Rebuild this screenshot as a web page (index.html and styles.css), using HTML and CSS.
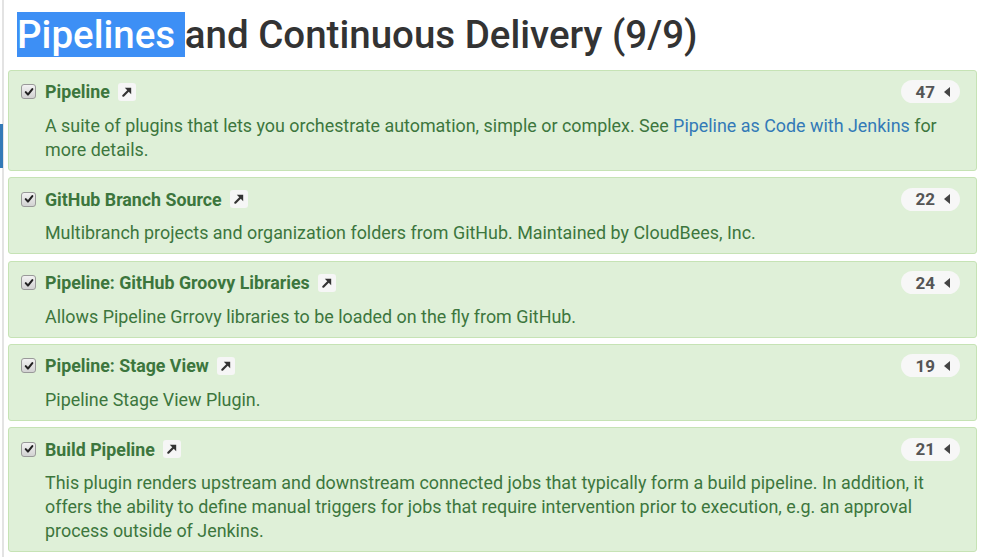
FILE: index.html
```html
<!DOCTYPE html>
<html>
<head>
<meta charset="utf-8">
<link rel="stylesheet" href="styles.css">
</head>
<body>
<div class="page">
  <div class="rail"><div class="rail-mark"></div></div>
  <main class="content">
    <h1 class="heading"><span class="sel">Pipelines </span>and Continuous Delivery (9/9)</h1>

    <div class="card">
      <div class="card-head">
        <span class="check"><svg viewBox="0 0 14 14" width="14" height="14"><path d="M3.2 7.2 L5.8 10 L10.9 3.6" fill="none" stroke="#222" stroke-width="2.4" stroke-linecap="round" stroke-linejoin="round"/></svg></span>
        <span class="name">Pipeline</span>
        <span class="ext"><svg viewBox="0 0 12 12" width="12" height="12"><path d="M2.3 9.7 L8 4" stroke="#333" stroke-width="2.2" stroke-linecap="round"/><path d="M3.8 1.8 H10.2 V8.2 Z" fill="#333"/></svg></span>
        <span class="badge">47<span class="caret"></span></span>
      </div>
      <p class="desc">A suite of plugins that lets you orchestrate automation, simple or complex. See <a class="link">Pipeline as Code with Jenkins</a> for more details.</p>
    </div>

    <div class="card">
      <div class="card-head">
        <span class="check"><svg viewBox="0 0 14 14" width="14" height="14"><path d="M3.2 7.2 L5.8 10 L10.9 3.6" fill="none" stroke="#222" stroke-width="2.4" stroke-linecap="round" stroke-linejoin="round"/></svg></span>
        <span class="name">GitHub Branch Source</span>
        <span class="ext"><svg viewBox="0 0 12 12" width="12" height="12"><path d="M2.3 9.7 L8 4" stroke="#333" stroke-width="2.2" stroke-linecap="round"/><path d="M3.8 1.8 H10.2 V8.2 Z" fill="#333"/></svg></span>
        <span class="badge">22<span class="caret"></span></span>
      </div>
      <p class="desc">Multibranch projects and organization folders from GitHub. Maintained by CloudBees, Inc.</p>
    </div>

    <div class="card">
      <div class="card-head">
        <span class="check"><svg viewBox="0 0 14 14" width="14" height="14"><path d="M3.2 7.2 L5.8 10 L10.9 3.6" fill="none" stroke="#222" stroke-width="2.4" stroke-linecap="round" stroke-linejoin="round"/></svg></span>
        <span class="name">Pipeline: GitHub Groovy Libraries</span>
        <span class="ext"><svg viewBox="0 0 12 12" width="12" height="12"><path d="M2.3 9.7 L8 4" stroke="#333" stroke-width="2.2" stroke-linecap="round"/><path d="M3.8 1.8 H10.2 V8.2 Z" fill="#333"/></svg></span>
        <span class="badge">24<span class="caret"></span></span>
      </div>
      <p class="desc">Allows Pipeline Grrovy libraries to be loaded on the fly from GitHub.</p>
    </div>

    <div class="card">
      <div class="card-head">
        <span class="check"><svg viewBox="0 0 14 14" width="14" height="14"><path d="M3.2 7.2 L5.8 10 L10.9 3.6" fill="none" stroke="#222" stroke-width="2.4" stroke-linecap="round" stroke-linejoin="round"/></svg></span>
        <span class="name">Pipeline: Stage View</span>
        <span class="ext"><svg viewBox="0 0 12 12" width="12" height="12"><path d="M2.3 9.7 L8 4" stroke="#333" stroke-width="2.2" stroke-linecap="round"/><path d="M3.8 1.8 H10.2 V8.2 Z" fill="#333"/></svg></span>
        <span class="badge">19<span class="caret"></span></span>
      </div>
      <p class="desc">Pipeline Stage View Plugin.</p>
    </div>

    <div class="card">
      <div class="card-head">
        <span class="check"><svg viewBox="0 0 14 14" width="14" height="14"><path d="M3.2 7.2 L5.8 10 L10.9 3.6" fill="none" stroke="#222" stroke-width="2.4" stroke-linecap="round" stroke-linejoin="round"/></svg></span>
        <span class="name">Build Pipeline</span>
        <span class="ext"><svg viewBox="0 0 12 12" width="12" height="12"><path d="M2.3 9.7 L8 4" stroke="#333" stroke-width="2.2" stroke-linecap="round"/><path d="M3.8 1.8 H10.2 V8.2 Z" fill="#333"/></svg></span>
        <span class="badge">21<span class="caret"></span></span>
      </div>
      <p class="desc">This plugin renders upstream and downstream connected jobs that typically form a build pipeline. In addition, it offers the ability to define manual triggers for jobs that require intervention prior to execution, e.g. an approval process outside of Jenkins.</p>
    </div>
  </main>
</div>
</body>
</html>
```

FILE: styles.css
```css
html, body {
  margin: 0;
  padding: 0;
  background: #fff;
  font-family: Roboto, "Liberation Sans", sans-serif;
  overflow: hidden;
}
.page {
  display: flex;
  height: 557px;
}
.rail {
  width: 2px;
  border-right: 2px solid #e3e3e3;
  flex: none;
}
.rail-mark {
  margin-top: 124px;
  width: 3px;
  height: 44px;
  background: #337ab7;
}
.content {
  margin-left: 4px;
  width: 969px;
  display: flex;
  flex-direction: column;
  gap: 6.3px;
}
.heading {
  margin: 12px 0 6.7px 9px;
  font-size: 38.5px;
  font-weight: 500;
  line-height: 45px;
  color: #333;
}
.sel {
  background: #3d8ff5;
  color: #fff;
}
.card {
  background: #dff0d8;
  border: 1px solid #c6e3b5;
  border-radius: 3px;
  padding: 9px 16px 8px 12px;
  color: #3c763d;
}
.card-head {
  display: flex;
  align-items: center;
  height: 24px;
}
.check {
  width: 15px;
  height: 15px;
  box-sizing: border-box;
  border: 1px solid #999;
  border-radius: 3px;
  background: linear-gradient(#f2f2f2, #d2d2d2);
  display: flex;
  align-items: center;
  justify-content: center;
  margin-right: 9px;
}
.check svg { width: 12px; height: 12px; }
.name {
  font-size: 17.8px;
  font-weight: 700;
  color: #3c763d;
}
.ext {
  margin-left: 8px;
  width: 18px;
  height: 18px;
  border-radius: 3px;
  background: #f6f6f6;
  display: flex;
  align-items: center;
  justify-content: center;
}
.badge {
  margin-left: auto;
  height: 23px;
  padding: 0 10px 0 14px;
  border-radius: 12px;
  background: #f7f7f7;
  color: #555;
  font-size: 17px;
  font-weight: 700;
  display: flex;
  align-items: center;
  gap: 9px;
}
.caret {
  width: 0;
  height: 0;
  border-top: 5px solid transparent;
  border-bottom: 5px solid transparent;
  border-right: 6px solid #444;
}
.desc {
  margin: 10px 0 0 24px;
  font-size: 17.9px;
  line-height: 24px;
}
.link {
  color: #337ab7;
  text-decoration: none;
}
```
